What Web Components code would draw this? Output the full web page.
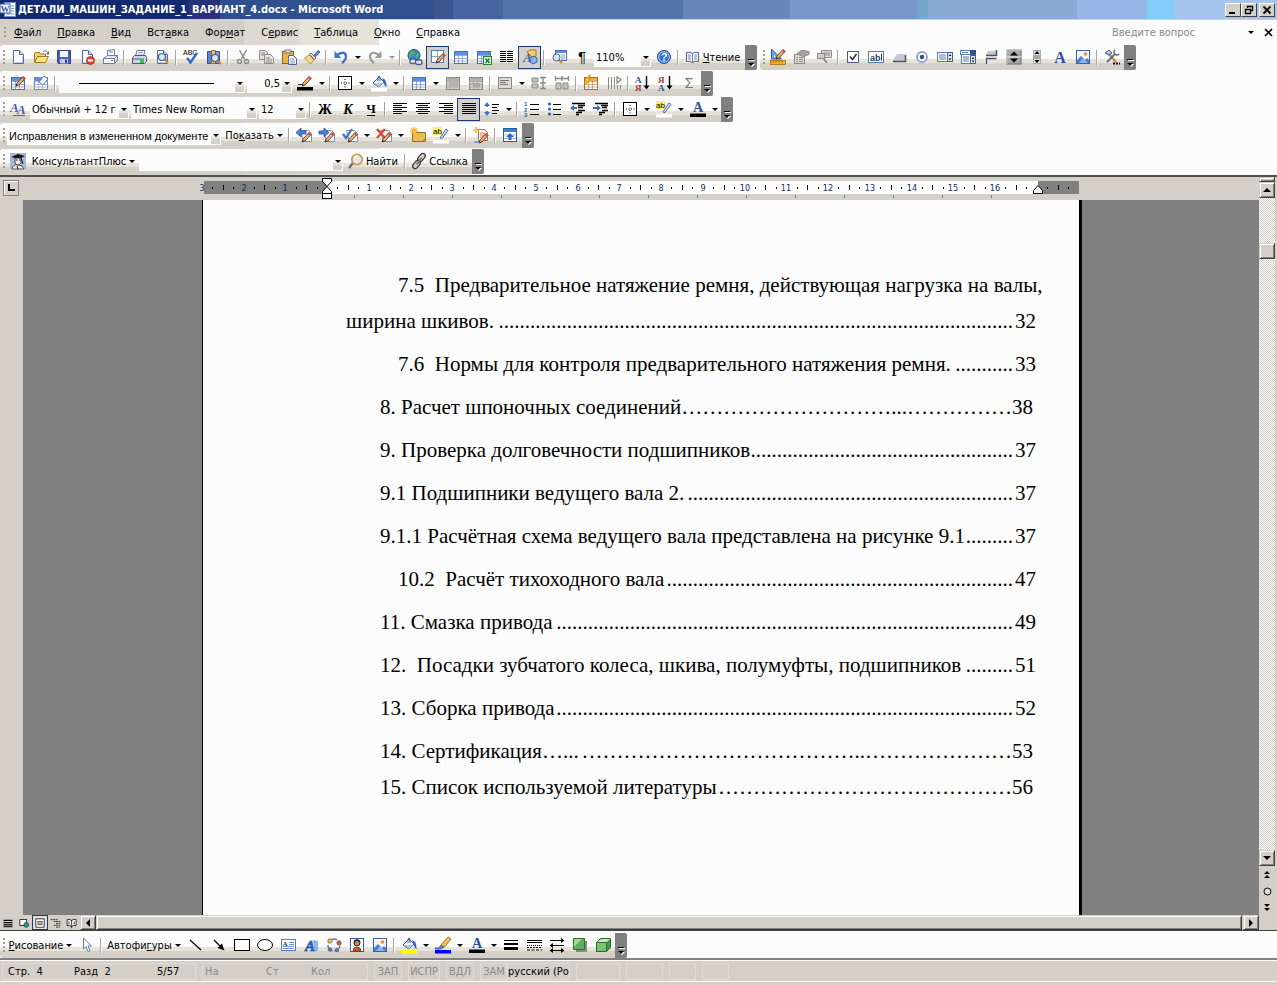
<!DOCTYPE html>
<html lang="ru">
<head>
<meta charset="utf-8">
<title>ДЕТАЛИ_МАШИН_ЗАДАНИЕ_1_ВАРИАНТ_4.docx - Microsoft Word</title>
<style>
body{margin:0;background:#fcfcfc;font:11px "DejaVu Sans Condensed","DejaVu Sans",sans-serif;color:#000}
</style>
</head>
<body>
<word-app></word-app>
<script>
/* ---------- icon drawings, 16 x 16 ---------- */
const page = '<path d="M3.500 1.500h6l4 4v9h-10z" fill="#fff" stroke="#4d6ba6"/><path d="M9.500 1.500v4h4" fill="#c9dcf5" stroke="#4d6ba6"/><path d="M12.500 7v6.500h-8" fill="none" stroke="#bcd2f0"/>';
const pencil = (x = 0, y = 0, c = '#f0b070') => `<g transform="translate(${x} ${y})"><path d="M5 11l1-3 6-6.500 2 2-6 6.500z" fill="${c}" stroke="#5a3418" stroke-width=".9"/><path d="M11 3l2 2 1.500-1.500-2-2z" fill="#d8493a"/><path d="M5 11l.6-2 1.400 1.300z" fill="#222"/></g>`;
const grid = (s = '#4a70b8', f = '#fff', h = '#5b8fe0') => `<rect x="1.500" y="2.500" width="13" height="12" fill="${f}" stroke="${s}"/><rect x="2" y="3" width="12" height="3" fill="${h}"/><path d="M2 6.500h12M2 9.500h12M2 12h12M5.500 6v8M9.500 6v8" stroke="${s}" stroke-opacity=".55" fill="none"/>`;
const glass = (x = 0, y = 0, f = '#cfe6fb') => `<g transform="translate(${x} ${y})"><path d="M10 10l4 4" stroke="#c98a3c" stroke-width="2.400"/><circle cx="8" cy="8" r="3.500" fill="${f}" stroke="#4a5f80" stroke-width="1.200"/></g>`;
const bucket = '<path d="M2 8l6-6 5 5-5 5z" fill="#eef4fc" stroke="#3f5f98"/><path d="M4 8h8l-4 4z" fill="#a9c6f0"/><path d="M7 6V2q1-2 2 0v4" fill="none" stroke="#3f5f98"/><path d="M11 3q5 1 4.500 9-2.500-1-3-5z" fill="#3a68c4"/>';
const letterA = '<text x="8" y="11" text-anchor="middle" font-family="Liberation Serif,serif" font-weight="bold" font-size="14" fill="#2c4f94">A</text>';
const bars = (a, b) => { let d = ''; for (let i = 0; i < 6; i++) { const w = i % 2 ? b : 14, x = a === 'l' ? 1 : a === 'r' ? 15 - w : 8 - w / 2; d += `M${x} ${2.5 + i * 2}h${w}`; } return `<path d="${d}" stroke="#000" fill="none"/>`; };
const revise = `<path d="M4.500 3.500h8l3 3v8h-8z" fill="#fff" stroke="#7a8db0"/>${pencil(1, 4)}`;
const swatch = c => `<rect x="0" y="13" width="16" height="3.500" fill="${c}"/>`;
const hl = `<rect x="0" y="0" width="9" height="8" fill="#f6f070"/><text x="0" y="7" font-family="Liberation Sans,sans-serif" font-size="8">ab</text><path d="M7 11l6-9 2 1.500-6 8z" fill="#cfe0fa" stroke="#4a69a5"/>${swatch('#fff')}`;
const pic = '<rect x="1.500" y="1.500" width="13" height="13" fill="#eef5ff" stroke="#3b5f9e"/><path d="M2 11l4-4 4 4 2-2 2 2v3H2z" fill="#4d7fcb"/><path d="M4 14l4-5 5 5z" fill="#8db5ea"/><circle cx="10.500" cy="5" r="1.800" fill="#f08a2c"/>';
const ICONS = {
  word: '<rect x="4.500" y=".5" width="11" height="14" fill="#fff" stroke="#6f8fc6"/><path d="M11 4h3M11 6.500h3M11 9h3M6 12h8" stroke="#6f8fc6"/><rect x="0" y="2" width="10" height="9" fill="#fff" stroke="#2b57a8"/><text x="5" y="9.500" text-anchor="middle" font-family="Liberation Serif,serif" font-weight="bold" font-size="9" fill="#2b57a8">W</text>',
  new: page,
  open: '<path d="M1.500 13.500v-9l1-1h4l1 1.500h5v3" fill="#f3d06b" stroke="#a27a1c"/><path d="M1.500 13.500l3-6h11l-3 6z" fill="#ffe28a" stroke="#a27a1c"/><path d="M10 3q3-3 5 1" stroke="#4d6f9d" fill="none"/><path d="M16 2v3.500h-3z" fill="#4d6f9d"/>',
  save: '<path d="M1.500 1.500h13v13h-12l-1-1z" fill="#4663b8" stroke="#2d3f86"/><rect x="4" y="2" width="8" height="6" fill="#f4f6fc"/><rect x="4" y="10" width="8" height="4.500" fill="#c3cce6"/><rect x="9" y="10.500" width="2" height="3.500" fill="#2d3f86"/>',
  perm: page + '<circle cx="11.500" cy="11.500" r="4" fill="#e2472f" stroke="#b02a18" stroke-width=".8"/><rect x="9" y="10.500" width="5" height="2" fill="#fff"/>',
  mail: '<path d="M5.500 6.500v-5l7-1v6" fill="#fff" stroke="#6b80a8"/><path d="M7 3h4" stroke="#6b80a8"/><path d="M1.500 9.500l4-3h10l-3 3z" fill="#dfe8f6" stroke="#6b80a8"/><rect x="1.500" y="9.500" width="11" height="5" fill="#f8fafe" stroke="#6b80a8"/><path d="M12.500 14.500l3-3v-5" fill="#b8c6e0" stroke="#6b80a8"/><rect x="9" y="11" width="2" height="1" fill="#d8492f"/>',
  print: '<path d="M4.500 7l1.500-5.500h8L12.500 7" fill="#fff" stroke="#5f7299"/><path d="M1.500 8.500l2-2h11l1 2v4l-2 2h-12z" fill="#cfd6e2" stroke="#4b5a78"/><path d="M2 10h11" stroke="#4b5a78"/><rect x="9" y="11" width="4" height="3" fill="#35c04a"/><path d="M7 3.500h5M6.500 5h5" stroke="#9fb0cf"/>',
  preview: page + glass(0, 0),
  spell: '<text x="0" y="6" font-family="Liberation Sans,sans-serif" font-size="7">ABC</text><path d="M4 9l3.500 4.500L14 4" fill="none" stroke="#2f67c9" stroke-width="2.400"/>',
  research: '<path d="M1.500 2.500h4v12h-4z" fill="#5c86d6" stroke="#344f8e"/><path d="M5.500 1.500h4v13h-4z" fill="#f0c060" stroke="#94702a"/><path d="M9.500 2.500h4v12h-4z" fill="#8d93d8" stroke="#4b4f8e"/>' + glass(1, 1),
  cut: '<path d="M4.500 1l5 9M11.500 1l-5 9" stroke="#8a8a8a" stroke-width="1.500"/><circle cx="4.500" cy="12.500" r="2" fill="none" stroke="#8a8a8a" stroke-width="1.400"/><circle cx="11.500" cy="12.500" r="2" fill="none" stroke="#8a8a8a" stroke-width="1.400"/>',
  copy: '<path d="M1.500 1.500h6l2 2v7h-8z" fill="#e2e0dc" stroke="#8c8a86"/><path d="M6.500 5.500h6l3 3v6h-9z" fill="#e8e6e2" stroke="#8c8a86"/><path d="M3 4h4M3 6h3M8 9h4M8 11h6M8 13h6" stroke="#8c8a86"/>',
  paste: '<rect x="1.500" y="2.500" width="11" height="12" fill="#e8b349" stroke="#8d6420"/><rect x="4" y="1" width="6" height="3" fill="#d8d8d8" stroke="#666" stroke-width=".8"/><path d="M7.500 6.500h5l3 3v6h-8z" fill="#fff" stroke="#4a66a0"/><path d="M9 10h4M9 12h5M9 14h5" stroke="#7b96c8"/>',
  format: '<path d="M10 6l4-4.500 2 1.500-4 4.500z" fill="#6d87c4" stroke="#3e4f80" stroke-width=".8"/><path d="M7 4l5 5-1.500 1.500-5-5z" fill="#d8d8e0" stroke="#555" stroke-width=".8"/><path d="M5 6l5 5-3.500 4L.5 9z" fill="#f4d88a" stroke="#a97e32" stroke-width=".8"/>',
  undo: '<path d="M4 6q8-5 9 1 0 4-4 7" fill="none" stroke="#3f74c8" stroke-width="2.400"/><path d="M1.500 2v7h7z" fill="#3f74c8"/>',
  redo: '<path d="M12 6q-8-5-9 1 0 4 4 7" fill="none" stroke="#9a9a9a" stroke-width="2.200"/><path d="M14.500 2v7h-7z" fill="#9a9a9a"/>',
  link: '<circle cx="7" cy="6.500" r="6" fill="#3d86cf" stroke="#1d4f8d"/><path d="M3 3q3-3 5 0-1 3-3 3t-2 4q-2-3 0-7zM9 5q3-1 3 2l-2 3z" fill="#59b54e"/><rect x="3" y="10" width="6" height="4.500" rx="2" fill="#dfe5f0" stroke="#4b5f8a" stroke-width="1.300"/><rect x="8.500" y="11" width="6.500" height="4.500" rx="2" fill="#dfe5f0" stroke="#4b5f8a" stroke-width="1.300"/>',
  tableborder: `<rect x="1.500" y="1.500" width="12" height="12" fill="#fff" stroke="#5b7bb0"/><path d="M7.500 2v11M2 7.500h11" stroke="#8ba4cf"/>${pencil(1, 3)}`,
  table: grid(),
  excel: grid() + '<rect x="7.500" y="7.500" width="8" height="8" fill="#dff2dc" stroke="#2d7d3a"/><path d="M9.500 9.500l4 4.500M13.500 9.500l-4 4.500" stroke="#1f7a30" stroke-width="1.500"/>',
  columns: '<path d="M1 2.500h6M1 4.500h6M1 6.500h6M1 8.500h6M1 10.500h6M1 12.500h6M8 2.500h6M8 4.500h6M8 6.500h6M8 8.500h6M8 10.500h6M8 12.500h6" stroke="#000"/>',
  drawing: '<path d="M5 3l3-2h6v6l-3 2z" fill="#f5cf6a" stroke="#a37a22"/><path d="M8 9l4-2 3 2v4l-4 2-3-2z" fill="#8fb2ea" stroke="#3b62ad"/><text x="5.500" y="13" text-anchor="middle" font-family="Liberation Serif,serif" font-weight="bold" font-style="italic" font-size="13" fill="#3b62ad">A</text>',
  docmap: '<rect x="4.500" y="1.500" width="11" height="10" fill="#fff" stroke="#4a70b8"/><rect x="5" y="2" width="10" height="2" fill="#5b8fe0"/><path d="M10 6h4M10 8h4M10 10h4" stroke="#7d98c8"/><path d="M8 11l3 3" stroke="#c98a3c" stroke-width="2.200"/><circle cx="5.500" cy="8.500" r="3.500" fill="#d6ebfd" stroke="#4a5f80"/>',
  para: '<text x="8" y="13" text-anchor="middle" font-family="Liberation Sans,sans-serif" font-size="15">¶</text>',
  help: '<circle cx="8" cy="8" r="6.500" fill="#2f6fd4" stroke="#1c479c"/><circle cx="8" cy="8" r="5.300" fill="none" stroke="#b7d2fa"/><text x="8" y="12" text-anchor="middle" font-family="Liberation Sans,sans-serif" font-weight="bold" font-size="11" fill="#fff">?</text>',
  book: '<path d="M1.500 3.500q4-1 6 1 2-2 6-1v9q-4-1-6 1-2-2-6-1z" fill="#fff" stroke="#4a5f8c"/><path d="M7.500 4v9M3 6h3M3 8h3M3 10h3M9 6h3M9 8h3M9 10h3" stroke="#6d84b4"/>',
  design: `<path d="M1.500 0l10 10h-10z" fill="#6da3ee" stroke="#2c5ba8"/><path d="M4 6l2 2H4z" fill="#fff"/>${pencil(1, -1)}<rect x=".5" y="11.500" width="15" height="4" fill="#f4b52e" stroke="#a86d10" stroke-width=".8"/><path d="M3 12v1.500M6 12v1.500M9 12v1.500M12 12v1.500" stroke="#6d4400" stroke-width=".8"/>`,
  props: '<rect x="1.500" y="5.500" width="10" height="9" fill="#e0deda" stroke="#8c8a86"/><path d="M3 8.500h2M6 8.500h4M3 10.500h2M6 10.500h4M3 12.500h2M6 12.500h4" stroke="#8c8a86"/><path d="M4 5l4-3.500h3l5 1v3l-6 2z" fill="#a5a39e" stroke="#8c8a86"/>',
  code: '<path d="M5.500 1.500h10v7h-10z" fill="#dddbd6" stroke="#8c8a86"/><path d="M7 4h7M7 6h7" stroke="#8c8a86"/><rect x="1.500" y="4.500" width="7" height="5" fill="#cfcdc8" stroke="#8c8a86"/><path d="M8 10l3 4" stroke="#8c8a86" stroke-width="2"/>',
  check: '<rect x="2.500" y="2.500" width="11" height="11" fill="#fff" stroke="#4a5f8c"/><path d="M5 7.500l2.500 3L11.500 5" fill="none" stroke="#333" stroke-width="1.600"/>',
  abl: '<rect x=".5" y="2.500" width="15" height="11" fill="#fff" stroke="#5b7bb0"/><text x="2" y="11.500" font-family="Liberation Sans,sans-serif" font-weight="bold" font-size="9" fill="#2d4068">ab</text><path d="M13.500 4.500v7" stroke="#2d4068"/>',
  cmd: '<path d="M2 11l4-6h8v7H2z" fill="#c3c8d4"/><path d="M2 12.500h12.500V6" fill="none" stroke="#4a5266" stroke-width="1.500"/>',
  radio: '<circle cx="8" cy="8" r="5" fill="#fff" stroke="#8ea4c9" stroke-width="1.800"/><circle cx="8" cy="8" r="2.200" fill="#2d5190"/>',
  list: '<rect x=".5" y="3.500" width="10" height="9" fill="#fff" stroke="#5b7bb0"/><path d="M2 6h7M2 8h7M2 10h7" stroke="#5b7bb0"/><rect x="10.500" y="3.500" width="5" height="9" fill="#dbe5f5" stroke="#4a5f8c"/><path d="M11.500 7l1.500-2 1.500 2zM11.500 9.500h3L13 11.500z" fill="#222"/>',
  combo: '<rect x=".5" y="1.500" width="15" height="4" fill="#fff" stroke="#5b7bb0"/><rect x="10" y="1" width="6" height="5" fill="#34508a"/><rect x="1.500" y="5.500" width="9" height="9" fill="#fff" stroke="#5b7bb0"/><path d="M3 8h6M3 10h6M3 12h6M2 3.500h6" stroke="#5b7bb0"/><rect x="10.500" y="6.500" width="5" height="8" fill="#dbe5f5" stroke="#4a5f8c"/><path d="M11.500 10l1.500-2 1.500 2zM11.500 11.500h3L13 13.500z" fill="#222"/>',
  toggle: '<path d="M3 6l2-4h8v4z" fill="#c3c8d4"/><path d="M3 6.500h10.500V1" fill="none" stroke="#4a5266" stroke-width="1.500"/><path d="M3 15v-5h9l-3 5z" fill="#dfe1e6"/><path d="M3 9.500h10.500M3.500 9v6" stroke="#4a5266" stroke-width="1.300"/>',
  spin: '<rect x="1" y="1" width="14" height="14" fill="#a9a9a9" stroke="#666"/><path d="M1 15V1h14" fill="none" stroke="#ddd"/><path d="M8 2.500l4 4H4zM8 13.500l4-4H4z" fill="#000"/><path d="M1 8h14" stroke="#eee"/>',
  scroll: '<rect x="4.500" y="1.500" width="7" height="5" fill="#d8d8d8" stroke="#aaa"/><rect x="4.500" y="9.500" width="7" height="5" fill="#d8d8d8" stroke="#aaa"/><path d="M8 2l2.500 3h-5zM8 14l2.500-3h-5z" fill="#000"/><path d="M4 8h8" stroke="#555"/>',
  label: '<text x="8" y="14" text-anchor="middle" font-family="Liberation Serif,serif" font-weight="bold" font-size="16" fill="#2c4f94">A</text>',
  pic,
  tools: '<path d="M3 3l9 10" stroke="#c58a3a" stroke-width="2.200"/><path d="M1 4l4-3 3 3-3 2z" fill="#b8c4dc" stroke="#4a5a7c"/><path d="M3 13l8-8" stroke="#5f6f8c" stroke-width="2"/><path d="M11 1q-2 2 0 4t4 0" fill="none" stroke="#5f6f8c" stroke-width="1.500"/><path d="M9 14.500h2M12 14.500h2M15 14.500h1" stroke="#000" stroke-width="1.800"/>',
  drawtable: grid() + pencil(1, 0),
  erasetable: grid('#6f8fc6') + '<path d="M6 7l5-6 4 3-5 6z" fill="#f3f6fc" stroke="#5b7bb0"/>',
  penline: `${pencil(0, 0)}<path d="M1 9.500h5" stroke="#333"/><rect x="0" y="12" width="16" height="3.500"/>`,
  border: '<rect x="1.500" y="1.500" width="13" height="13" fill="#fff" stroke="#000"/><path d="M8 4v9M4 8h9" stroke="#000" stroke-dasharray="1 1.500"/>',
  fillwhite: bucket + swatch('#fff'),
  merge: grid('#8c8a86', '#d6d3cd', '#b5b3ae') + '<rect x="4" y="6" width="9" height="6" fill="#b5b3ae"/>',
  split: grid('#8c8a86', '#d6d3cd', '#b5b3ae') + '<path d="M3 8h9v4H6z" fill="#aaa8a3"/>',
  cellalign: '<rect x="1.500" y="2.500" width="13" height="11" fill="#dddbd6" stroke="#8c8a86"/><path d="M3 5.500h9M3 7.500h6M3 9.500h8" stroke="#77756f"/>',
  distrow: '<path d="M1 3h6v4H1zM1 9h6v4H1z" fill="#c4c2bd" stroke="#8c8a86"/><path d="M9 2.500h6M9 8h6M9 13.500h6M12 3v10" stroke="#8c8a86" stroke-width="1.400"/>',
  distcol: '<path d="M2 8h5v6H2zM9 8h5v6H9z" fill="#c4c2bd" stroke="#8c8a86"/><path d="M1.500 1v5M8 1v5M14.500 1v5M2 3.500h12" stroke="#8c8a86" stroke-width="1.400"/>',
  autoformat: grid('#b06a28', '#fff', '#f0a848') + '<path d="M6 0L1 6h3L1 11l7-7H5l3-4z" fill="#f4c53c" stroke="#b8860b" stroke-width=".6"/>',
  textdir: '<path d="M2.500 2v12M5.500 2v12M8.500 2v12" stroke="#8c8a86"/><path d="M11 2l4 2.500L11 8z" fill="none" stroke="#8c8a86" stroke-width="1.300"/><path d="M11.500 14v-4M14.500 14v-4" stroke="#8c8a86"/>',
  sortaz: '<text x="0" y="7.500" font-family="Liberation Serif,serif" font-weight="bold" font-size="9" fill="#2c4f94">А</text><text x="0" y="15.500" font-family="Liberation Serif,serif" font-weight="bold" font-size="9" fill="#a23c34">Я</text><path d="M11.500 1v11" stroke="#000" stroke-width="1.400"/><path d="M8.500 10.500h6l-3 4z"/>',
  sortza: '<text x="0" y="7.500" font-family="Liberation Serif,serif" font-weight="bold" font-size="9" fill="#a23c34">Я</text><text x="0" y="15.500" font-family="Liberation Serif,serif" font-weight="bold" font-size="9" fill="#2c4f94">А</text><path d="M11.500 1v11" stroke="#000" stroke-width="1.400"/><path d="M8.500 10.500h6l-3 4z"/>',
  sum: '<text x="8" y="13" text-anchor="middle" font-family="Liberation Sans,sans-serif" font-size="14" fill="#77756f">Σ</text>',
  styles: '<text x="0" y="11" font-family="Liberation Serif,serif" font-style="italic" font-weight="bold" font-size="13" fill="#3f62b0">A</text><text x="7" y="13" font-family="Liberation Serif,serif" font-style="italic" font-weight="bold" font-size="13" fill="#5a50b0">A</text><path d="M3 14.500h12" stroke="#8147a8"/>',
  bold: '<text x="8" y="13" text-anchor="middle" font-family="Liberation Serif,serif" font-weight="bold" font-size="14">Ж</text>',
  italic: '<text x="8" y="13" text-anchor="middle" font-family="Liberation Serif,serif" font-weight="bold" font-style="italic" font-size="14">К</text>',
  under: '<text x="8" y="12" text-anchor="middle" font-family="Liberation Serif,serif" font-weight="bold" font-size="13">Ч</text><path d="M4 14.500h8" stroke="#000"/>',
  left: bars('l', 9), center: bars('c', 10), right: bars('r', 9), justify: bars('l', 14),
  spacing: '<path d="M3 3v3M3 10v3" stroke="#3b6fc8" stroke-width="1.600"/><path d="M0 5l3-4 3 4zM0 11h6l-3 4z" fill="#3b6fc8"/><path d="M8 3.500h7M8 6.500h5M8 9.500h7M8 12.500h5" stroke="#000"/>',
  numbers: '<text x="0" y="5" font-family="Liberation Sans,sans-serif" font-weight="bold" font-size="6" fill="#2c5fb8">1</text><text x="0" y="10.500" font-family="Liberation Sans,sans-serif" font-weight="bold" font-size="6" fill="#2c5fb8">2</text><text x="0" y="16" font-family="Liberation Sans,sans-serif" font-weight="bold" font-size="6" fill="#2c5fb8">3</text><path d="M6 3.500h9M6 8.500h9M6 13.500h9" stroke="#000"/>',
  bullets: '<g fill="#2c5fb8"><circle cx="2.500" cy="3" r="1.600"/><circle cx="2.500" cy="8" r="1.600"/><circle cx="2.500" cy="13" r="1.600"/></g><path d="M6 3.500h8M6 8.500h8M6 13.500h8" stroke="#000"/>',
  outdent: '<path d="M2 2.500h13M8 4.500h7M8 6.500h5M8 9.500h7M6 11.500h6M6 13.500h3" stroke="#000" stroke-width="1.300"/><path d="M0 7l4-3v2h3v2H4v2z" fill="#3b6fc8"/>',
  indent: '<path d="M2 2.500h13M8 4.500h7M9 6.500h5M9 9.500h6M6 11.500h6M6 13.500h3" stroke="#000" stroke-width="1.300"/><path d="M8 7L4 4v2H0v2h4v2z" fill="#3b6fc8"/>',
  hl,
  fontcolor: letterA + '<rect x="0" y="12.500" width="16" height="3.500"/>',
  prev: revise + '<path d="M0 5.500L5 1v3h5v3H5v3z" fill="#4c83d8" stroke="#24509c" stroke-width=".8"/>',
  next: revise + '<path d="M10 5.500L5 1v3H0v3h5v3z" fill="#4c83d8" stroke="#24509c" stroke-width=".8"/>',
  accept: revise + '<path d="M1 7l3 4 6-9" fill="none" stroke="#3d73c8" stroke-width="2.200"/>',
  reject: revise + '<path d="M1 2l8 9M9 2l-8 9" stroke="#e0442c" stroke-width="2.200"/>',
  comment: '<path d="M2.500 5.500h13v9h-13z" fill="#e6bf58" stroke="#946c1c"/><path d="M12 14.500l3.500-3" stroke="#946c1c"/><path d="M0 4h8M4 0v8M1 1l6 6M7 1L1 7" stroke="#f5b83c" stroke-width="1.300"/>',
  track: `<path d="M5.500 2.500h6l3 3v8h-9z" fill="#fff" stroke="#a87040"/><path d="M7 6h5M7 8h6M7 10h6" stroke="#d86a48"/>${pencil(1, 5)}<path d="M0 3h6M3 0v6" stroke="#f5b83c" stroke-width="1.600"/><path d="M1 15h6" stroke="#3b6fc8"/>`,
  pane: '<rect x="1.500" y="1.500" width="13" height="13" fill="#fff" stroke="#2c5ba8"/><rect x="2" y="2" width="12" height="3" fill="#3f7bd8"/><path d="M2 8h12M2 11.500h12" stroke="#9db9e6"/><path d="M8 6l4 4H9.500v3h-3v-3H4z" fill="#2c67c4"/>',
  student: '<rect width="16" height="16" fill="#a9b6d8"/><path d="M1 4l7-3 7 2-6 3z" fill="#151515"/><path d="M5 5h6v5q-3 4-6 0z" fill="#eee8e0" stroke="#222" stroke-width=".8"/><path d="M2 16q1-5 6-4 5 0 6 4z" fill="#f2f2f2" stroke="#333" stroke-width=".8"/><path d="M11 5l2 6M6 7h1.500M9 7h1.500M7 13l1 3" stroke="#111"/>',
  find: '<path d="M1 15l4-5" stroke="#5d6b80" stroke-width="2.400"/><circle cx="9" cy="6.500" r="5.200" fill="#d7ecfa" stroke="#d8963c" stroke-width="1.800"/><path d="M6 5q1-2 4-2" stroke="#fff" fill="none" stroke-width="1.300"/>',
  chain: '<g fill="#d0d0d0" stroke="#3c3c3c" stroke-width="1.300"><rect x="8" y="0" width="5" height="9" rx="2.500" transform="rotate(40 10.500 4.500)"/><rect x="3" y="7" width="5" height="9" rx="2.500" transform="rotate(40 5.500 11.500)"/></g><path d="M10.500 5l-5 6.500" stroke="#777" stroke-width="2"/>',
  cursor: '<path d="M4.500 1v11l2.500-2.500L9 14.500l2-1-2-4.500h3.500z" fill="#fff" stroke="#5b7bb0"/>',
  line: '<path d="M2 3l11 10" stroke="#000" stroke-width="1.200"/>',
  arrow: '<path d="M3 3l7 7" stroke="#000" stroke-width="1.200"/><path d="M13.500 13.500L6.500 11l4.500-4.500z"/>',
  rect: '<rect x=".5" y="2.500" width="15" height="11" fill="#fff" stroke="#000"/>',
  oval: '<ellipse cx="8" cy="8" rx="7.500" ry="5.500" fill="#fff" stroke="#000"/>',
  textbox: '<rect x="1.500" y="2.500" width="14" height="11" fill="#fff" stroke="#5b7bb0"/><text x="2.500" y="8.500" font-family="Liberation Serif,serif" font-weight="bold" font-size="7" fill="#1c3e86">A</text><path d="M9 5.500h5M9 7.500h5M3 9.500h11M3 11.500h11" stroke="#6d8ec6"/>',
  wordart: '<path d="M10 3l5 1v10l-4 1z" fill="#8db5ea"/><text x="7" y="14" text-anchor="middle" font-family="Liberation Serif,serif" font-weight="bold" font-style="italic" font-size="15" fill="#2f6bd0" stroke="#1c479c" stroke-width=".6">A</text>',
  diagram: '<path d="M8 2a6 6 0 1 1-.1 0" fill="none" stroke="#4a70b8" stroke-dasharray="3 2" stroke-width="1.400"/><g stroke="#555" stroke-width=".7"><circle cx="4" cy="4" r="2.200" fill="#f2c24e"/><circle cx="13" cy="6" r="2.200" fill="#e0583c"/><circle cx="4" cy="12.500" r="1.800" fill="#4c83d8"/><circle cx="11" cy="13" r="1.800" fill="#4c83d8"/></g>',
  clip: '<rect x="1.500" y="1.500" width="13" height="13" fill="#fff" stroke="#3b5f9e"/><circle cx="8" cy="6" r="3" fill="#c98a5a" stroke="#222"/><path d="M5 5q3-4 6 0" stroke="#222" stroke-width="1.600" fill="none"/><path d="M4 14q0-4 4-4t4 4z" fill="#d85a2a" stroke="#5a2a10" stroke-width=".7"/>',
  fillyellow: bucket + swatch('#ff0'),
  brush: `<path d="M0 11q4 1 6-3l3 2q-2 3-9 2z" fill="#4f7fd0" stroke="#2c4f94" stroke-width=".6"/><path d="M6 8l7-8 3 2-6.500 8z" fill="#f2c14e" stroke="#7a5a20" stroke-width=".8"/>${swatch('#00f')}`,
  lines: '<path d="M1 3.500h14" stroke="#000"/><path d="M1 7h14" stroke="#000" stroke-width="2"/><path d="M1 11.500h14" stroke="#000" stroke-width="3"/>',
  dashes: '<path d="M1 3.500h15M1 5.500h15" stroke="#000"/><path d="M1 8.500h15" stroke="#000" stroke-dasharray="1 1"/><path d="M1 10.500h15" stroke="#000" stroke-dasharray="2 1"/><path d="M1 13h15" stroke="#000" stroke-dasharray="3 1.500"/>',
  arrows: '<path d="M1 3.500h12M3 8.500h12M3 13.500h10" stroke="#000"/><path d="M15.500 3.500L12 1v5zM.5 8.500L4 6v5zM15.500 13.500L12 11v5zM.5 13.500L4 11v5z"/>',
  shadow: '<path d="M4 4h11v11H4z" fill="#888"/><path d="M1.500 1.500h11v11h-11z" fill="#5fae5a" stroke="#2f6f2e"/><path d="M2 2h8L2 10z" fill="#9fd79a"/>',
  cube: '<path d="M1.500 5.500l4-4h10v9l-4 4h-10z" fill="#4c9a48" stroke="#2c6a2a"/><path d="M1.500 5.500h10v9h-10z" fill="#78c273" stroke="#2c6a2a"/><path d="M2 5l4-3h9l-3.500 3z" fill="#c3ecbe"/>',
  vnormal: '<path d="M2 4.500h12M2 7.500h12M2 10.500h12M2 13h12" stroke="#000" stroke-width="1.400"/>',
  vweb: '<rect x="2.500" y="3.500" width="9" height="8" fill="#fff" stroke="#000"/><circle cx="11" cy="10.500" r="3.200" fill="#3a9a52" stroke="#113c98"/>',
  vprint: '<rect x="2.500" y="2.500" width="11" height="11" fill="#fff" stroke="#000"/><path d="M4.500 6.500h7M4.500 9.500h7" stroke="#000" stroke-width="1.300"/>',
  voutline: '<path d="M1 3.500h9M5 6h9M8 8.500h6M5 11h9M8 13.500h5" stroke="#000" stroke-dasharray="2.500 .8"/>',
  vread: '<path d="M1.500 3.500q4-1 6 1 2-2 6-1v8q-4-1-6 1-2-2-6-1z" fill="#fff" stroke="#000"/><path d="M7.500 4v11M4 6v4M11 6v4" stroke="#000"/>'
};
const svg = (n, s = 16) => `<svg width="${s}" height="${s}" viewBox="0 0 16 16" aria-hidden="true">${ICONS[n] || ''}</svg>`;

class Base extends HTMLElement {
  connectedCallback() {
    if (this.shadowRoot) return;
    const t = document.createElement('template');
    t.innerHTML = this.view();
    this.attachShadow({ mode: 'open' }).append(t.content.cloneNode(true));
    this.ready?.();
  }
}
const def = (n, c) => customElements.define(n, c);

/* <tool-button icon label active menu>: an icon, a caption in the slot, or both */
def('tool-button', class extends Base {
  view() {
    const i = this.getAttribute('icon'), l = this.getAttribute('label');
    return `<style>
      :host{display:block;flex:none;height:23px;width:var(--w,23px)}
      button{all:unset;box-sizing:border-box;display:flex;align-items:center;justify-content:center;gap:2px;width:100%;height:100%;white-space:nowrap}
      :host([active]) button{background:#d4d0ca;border:1px solid #1c3a78}
      svg{display:block;flex:none;margin-bottom:1px;overflow:visible}
      i{border:3px solid transparent;border-top-color:#000;border-bottom:0;margin-left:1px}
    </style><button type="button"${l ? ` aria-label="${l}"` : ''}>${i ? svg(i) : ''}<slot></slot>${this.hasAttribute('menu') ? '<i></i>' : ''}</button>`;
  }
});
def('drop-arrow', class extends Base {
  view() {
    return `<style>:host{display:block;flex:none;width:11px;height:23px}
      button{all:unset;display:flex;width:100%;height:100%;align-items:center;justify-content:center}
      i{border:3px solid transparent;border-top-color:var(--arrow,#000);border-bottom:0}</style>
      <button type="button" aria-label="Ещё варианты"><i></i></button>`;
  }
});
def('tool-sep', class extends Base {
  view() { return '<style>:host{display:block;flex:none;width:1px;height:15px;margin:0 3px 0 2px;background:#a7a39c;box-shadow:1px 0 #fff}</style>'; }
});
def('combo-box', class extends Base {
  view() {
    return `<style>:host{display:block;flex:none;position:relative;height:19px;background:#fcfcfc;width:var(--w);margin:0 1px}
      select{appearance:none;border:0;margin:0;padding:0 12px 0 2px;background:transparent;color:#000;font:inherit;width:100%;height:100%;text-align:inherit;border-radius:0;outline:0}
      i{position:absolute;right:0;top:0;bottom:0;width:11px;pointer-events:none;display:flex;align-items:center;justify-content:center;background:linear-gradient(#fcfcfc 55%,#e7e3d9 55% 72%,#d4d0c8 72%);border:1px solid #fcfcfc;border-top:0;box-sizing:border-box}
      i::before{content:"";border:3px solid transparent;border-top-color:#000;border-bottom:0}
      :host([rule])::before{content:"";position:absolute;left:20px;right:31px;top:9px;height:1px;background:#000}
    </style><select aria-label="${this.getAttribute('label')}"><option>${this.getAttribute('value') || ''}</option></select><i></i>`;
  }
});
def('tool-bar', class extends Base {
  view() {
    return `<style>:host{display:flex;flex:none;align-items:center;height:25px;width:max-content;border-radius:3px 2px 2px 3px;background:linear-gradient(#fcfcfc 55%,#e7e3d9 55% 72%,#d4d0c8 72%);overflow:hidden}
      .grip{width:2px;height:15px;margin:0 1px 0 3px;background:repeating-linear-gradient(#a5a198 0 2px,transparent 2px 4px)}
      .end{all:unset;width:12px;height:25px;background:#808080;margin-left:1px;display:flex;flex-direction:column;align-items:center;justify-content:flex-end}
      .end b{width:6px;height:1px;background:#000;box-shadow:1px 1px #fff;margin-bottom:3px}
      .end i{border:3px solid transparent;border-top-color:#000;border-bottom:0;margin-bottom:4px;filter:drop-shadow(1px 1px #fff)}
    </style><span class="grip"></span><slot></slot><button class="end" type="button" aria-label="Параметры панелей инструментов"><b></b><i></i></button>`;
  }
});
def('title-bar', class extends Base {
  view() {
    return `<style>:host{display:flex;align-items:center;height:19px;color:#fff;font-weight:bold;border-bottom:1px solid #d4d0c8;
      background:linear-gradient(90deg,#122b6e 14.700%,#27317c 14.700% 17.200%,#2f4f8d 17.200% 34%,#3c5690 34% 35.500%,#4665a0 35.500% 39.400%,#5272aa 39.400% 53.500%,#6787b9 53.500% 61.900%,#7998c9 61.900% 71.800%,#73a8cc 71.800% 72.700%,#8aaad6 72.700% 84.300%,#96b6e6 84.300% 89.800%,#82cdfa 89.800% 91.900%,#a4c6ee 91.900%)}
      h1{font:inherit;margin:0 auto 0 2px;white-space:nowrap}
      svg{flex:none;display:block}
      button{all:unset;box-sizing:border-box;width:16px;height:14px;background:#d4d0c8;border:1px solid;border-color:#fff #404040 #404040 #fff;display:flex;align-items:center;justify-content:center}
      .x{margin:0 2px}
    </style>${svg('word')}<h1><slot></slot></h1>
    <button type="button" aria-label="Свернуть"><svg width="10" height="10"><path d="M1 8h6" stroke="#000" stroke-width="2"/></svg></button>
    <button type="button" aria-label="Восстановить"><svg width="10" height="10"><path d="M3.500 3V1.500h5v4H7M3 1.500h6M1.500 4.500h5v4h-5zM1 4.500h6" fill="none" stroke="#000" stroke-width="1.300"/></svg></button>
    <button class="x" type="button" aria-label="Закрыть"><svg width="10" height="10"><path d="M1.500 1.500l7 7M8.500 1.500l-7 7" stroke="#000" stroke-width="1.800"/></svg></button>`;
  }
});
def('menu-bar', class extends Base {
  view() {
    return `<style>:host{display:flex;align-items:center;height:25px}
      .grip{width:2px;height:12px;margin:0 8px 0 4px;background:repeating-linear-gradient(#a5a198 0 2px,transparent 2px 4px)}
      nav{display:flex;gap:16px;flex:1}
      nav a{color:#000;text-decoration:none;white-space:nowrap}
      input{border:0;background:none;font:inherit;width:136px;padding:0;outline:0}
      input::placeholder{color:#8a8a8a;opacity:1}
      i{border:3px solid transparent;border-top-color:#000;border-bottom:0;margin-right:10px}
      button{all:unset;width:9px;height:9px;margin-right:4px}
      svg{display:block}
    </style><span class="grip"></span><nav>
    <a href="#file"><u>Ф</u>айл</a><a href="#edit"><u>П</u>равка</a><a href="#view"><u>В</u>ид</a><a href="#insert">Вст<u>а</u>вка</a><a href="#format">Фор<u>м</u>ат</a><a href="#service">С<u>е</u>рвис</a><a href="#table"><u>Т</u>аблица</a><a href="#window"><u>О</u>кно</a><a href="#help"><u>С</u>правка</a></nav>
    <input aria-label="Введите вопрос" placeholder="Введите вопрос"><i></i>
    <button type="button" aria-label="Закрыть документ"><svg width="9" height="9"><path d="M1 1l7 7M8 1L1 8" stroke="#000" stroke-width="1.600"/></svg></button>`;
  }
});
/* horizontal ruler; one centimetre is 41.750 units, zero at the left text margin */
def('doc-ruler', class extends Base {
  view() {
    const u = 41.75, z = 125; let s = '', n = '';
    for (let k = -11; k <= 71; k++) {
      const x = z + k * u / 4;
      if (k === 0 || k === 68 || x > 874) continue;
      if (k % 4 === 0) n += `<text x="${Math.round(x)}" y="15" text-anchor="middle">${Math.abs(k / 4)}</text>`;
      else if (k % 2 === 0) s += `<path d="M${Math.round(x)}.5 9v5"/>`;
      else s += `<path d="M${Math.round(x)}.5 11v2"/>`;
    }
    let t = ''; for (let x = 152; x < 820; x += 49) t += `<path d="M${x}.5 19v3" stroke="#808080"/>`;
    return `<style>:host{display:flex;height:23px;background:#d4d0c8;box-sizing:border-box}
      .tab{all:unset;flex:none;box-sizing:border-box;width:16px;height:16px;margin:3px 0 0 3px;border:1px solid #808080;box-shadow:inset 1px 1px #fff;display:grid;place-items:center}
      .track{flex:1;display:flex;justify-content:center;margin-left:4px;overflow:hidden}
      svg{display:block;flex:none} text{font-size:9px;fill:#14305c}
    </style><button class="tab" type="button" aria-label="Позиция табуляции"><svg width="8" height="8"><path d="M2 0v6h6" fill="none" stroke="#000" stroke-width="2"/></svg></button>
    <div class="track"><svg width="884" height="23" viewBox="-3 1 884 23"><rect x="2" y="5" width="875" height="13" fill="#808080"/><rect x="125" y="5" width="711" height="13" fill="#fcfcfc"/><text x="0" y="15" text-anchor="middle">3</text>
    ${n}<g stroke="#000" fill="none">${s}${t}</g>
    <g fill="#fcfcfc" stroke="#000"><path d="M120.500 2.500h9v3l-4.500 5-4.500-5z"/><path d="M120.500 17.500v-2l4.500-5 4.500 5v2z"/><rect x="120.500" y="17.500" width="9" height="5"/><path d="M831.500 17.500v-3l4.500-5 4.500 5v3z"/></g></svg></div>`;
  }
});
/* one line of the contents: entry, leader, page number */
def('toc-line', class extends Base {
  view() {
    const n = this.getAttribute('page');
    return `<style>:host{display:flex;height:36px;line-height:36px;margin-bottom:7px;padding-right:2px;white-space:pre;box-sizing:border-box}
      :host([level="1"]){padding-left:34px} :host([level="2"]){padding-left:52px}
      :host([tight]){margin-bottom:0} :host([fill="…"]){padding-right:5px}
      .fill{flex:1;min-width:0;overflow:hidden;text-align:right;margin-right:2px} :host([fill="…"]) .fill{margin-right:0}
    </style><span><slot></slot></span>${n ? `<span class="fill"></span><span>${n}</span>` : ''}`;
  }
  ready() {
    const f = this.shadowRoot.querySelector('.fill');
    if (!f) return;
    const ch = this.getAttribute('fill') || '.', c = document.createElement('canvas').getContext('2d');
    const cs = getComputedStyle(this); c.font = `${cs.fontSize} ${cs.fontFamily}`;
    const w = c.measureText(ch).width, dot = c.measureText('.').width;
    /* whole ellipses first, plain dots in what is left */
    const fill = () => {
      const n = Math.max(0, Math.floor(f.clientWidth / w));
      const rest = ch === '.' ? 0 : Math.floor((f.clientWidth - n * w) / dot), a = Math.floor(n * 2 / 3);
      f.textContent = ch.repeat(a) + '.'.repeat(Math.max(0, rest)) + ch.repeat(n - a);
    };
    new ResizeObserver(fill).observe(f);
    fill();
  }
});
const bevel = 'all:unset;box-sizing:border-box;flex:none;background:#d4d0c8;border:1px solid;border-color:#d4d0c8 #404040 #404040 #d4d0c8;box-shadow:inset 1px 1px #fff,inset -1px -1px #808080;display:grid;place-items:center;';
const checker = 'background:repeating-conic-gradient(#fff 0 25%,#d4d0c8 0 50%) 0 0/2px 2px;';
def('scroll-v', class extends Base {
  view() {
    return `<style>:host{display:flex;flex-direction:column;width:16px;${checker}}
      button{${bevel}width:16px;height:16px}.split{height:5px}.thumb{margin-top:45px}.gap{flex:1}
      .nav{background:#d4d0c8;display:flex;flex-direction:column;height:63px;padding-top:1px}
      .nav button{border:0;box-shadow:none}svg{display:block}</style>
      <button class="split" type="button" aria-label="Разделить"></button>
      <button type="button" aria-label="Вверх"><svg width="8" height="4"><path d="M0 4h8L4 0z"/></svg></button>
      <button class="thumb" type="button" aria-label="Бегунок"></button><span class="gap"></span>
      <button type="button" aria-label="Вниз"><svg width="8" height="4"><path d="M0 0h8L4 4z"/></svg></button>
      <div class="nav"><button type="button" aria-label="Предыдущая страница"><svg width="8" height="8"><path d="M4 0l3 3H1zM4 4l3 3H1zM2 7h4"/></svg></button>
      <button type="button" aria-label="Выбор объекта"><svg width="9" height="9"><circle cx="4.500" cy="4.500" r="3.500" fill="#ddd" stroke="#000"/></svg></button>
      <button type="button" aria-label="Следующая страница"><svg width="8" height="8"><path d="M4 4l3-3H1zM4 8l3-3H1z"/></svg></button></div>`;
  }
});
def('scroll-h', class extends Base {
  view() {
    const v = (n, l, a) => `<button class="v${a ? ' a' : ''}" type="button" aria-label="${l}">${svg(n, 12)}</button>`;
    return `<style>:host{display:flex;height:15px;background:#d4d0c8}
      button{${bevel}width:16px;height:15px}svg{display:block}
      .v{border:0;box-shadow:none}.a{border:1px solid #1c3a78;background:#e4e2de}
      .thumb{flex:1;margin-right:1px}</style>
      ${v('vnormal', 'Обычный режим')}${v('vweb', 'Веб-документ')}${v('vprint', 'Разметка страницы', 1)}${v('voutline', 'Структура')}${v('vread', 'Чтение')}
      <button type="button" aria-label="Влево"><svg width="4" height="8"><path d="M4 0v8L0 4z"/></svg></button>
      <button class="thumb" type="button" aria-label="Бегунок"></button>
      <button type="button" aria-label="Вправо"><svg width="4" height="8"><path d="M0 0v8l4-4z"/></svg></button>`;
  }
});
def('status-bar', class extends Base {
  view() {
    return `<style>:host{display:flex;align-items:center;gap:6px;height:20px;padding-left:2px;background:#d4d0c8;border-top:1px solid #fff;border-bottom:1px solid #fff}
      div{box-sizing:border-box;height:17px;border:1px solid #dedbd4;display:flex;align-items:center;justify-content:center;white-space:pre;color:#8a8a8a;overflow:hidden}
      .p{width:194px;justify-content:flex-start;color:#000;padding-left:5px}.p span,.q span{flex:none}
      .p span:nth-child(1){width:66px}.p span:nth-child(2){width:83px}
      .q{width:166px;justify-content:flex-start;padding-left:2px}.q span:nth-child(1){width:61px}.q span:nth-child(2){width:45px}
      .m{width:28px}.w{width:32px}.l{width:64px;color:#000;justify-content:flex-start;margin-left:-8px;padding-left:1px}.e{width:44px}.f{width:37px}.g{width:27px}
    </style><div class="p"><span>Стр.  4</span><span>Разд  2</span><span>5/57</span></div><div class="q"><span>На</span><span>Ст</span><span>Кол</span></div>
    <div class="m">ЗАП</div><div class="w">ИСПР</div><div class="m">ВДЛ</div><div class="m">ЗАМ</div><div class="l">русский (Ро</div><div class="e"></div><div class="f"></div><div class="g"></div><div class="g"></div>`;
  }
});

/* a run of tool buttons: name:label, "|" separator, "v" drop arrow, "*" marks a pressed button */
const run = s => s.split(',').map(k => {
  if (k === '|') return '<tool-sep></tool-sep>';
  if (k === 'v') return '<drop-arrow></drop-arrow>';
  if (k === 'g') return '<drop-arrow style="--arrow:#999"></drop-arrow>';
  const [n, l] = k.replace('*', '').split(':');
  return `<tool-button icon="${n}" label="${l}"${k.includes('*') ? ' active' : ''}></tool-button>`;
}).join('');

def('word-app', class extends Base {
  view() {
    return `<style>
      :host{display:flex;flex-direction:column;min-height:100vh}
      .dock{background:linear-gradient(90deg,#d4d0c8 19.100%,#dedad2 19.100% 23.500%,#e7e3d9 23.500% 29.700%,#fcfcfc 29.700%)}
      .row{display:flex;gap:3px;margin-bottom:1px}
      .frame{flex:1;display:flex;border-top:2px solid #505050;background:#d4d0c8}
      .main{flex:1;display:flex;flex-direction:column;min-width:0}
      .desk{flex:1;background:#808080;margin-left:23px;padding-left:2px;display:flex;justify-content:center}
      .page{box-sizing:border-box;width:880px;background:#fcfcfc;border-left:1px solid #000;border-right:3px solid #000;padding:67px 41px 0 143px;font:21px "Liberation Serif",serif}
      scroll-v{margin-right:2px}
      .draw{padding:2px 0 0;border-bottom:2px solid #808080;background:#fcfcfc;border-top:1px solid #404040}
      .edge{height:3px;background:#d4d0c8}
      .small{font-family:"Liberation Sans",sans-serif}
    </style>
    <title-bar>ДЕТАЛИ_МАШИН_ЗАДАНИЕ_1_ВАРИАНТ_4.docx - Microsoft Word</title-bar>
    <div class="dock"><menu-bar></menu-bar>
      <div class="row"><tool-bar>${run('new:Создать,open:Открыть,save:Сохранить,perm:Разрешения,mail:Сообщение,|,print:Печать,preview:Просмотр,|,spell:Правописание,research:Справочные материалы,|,cut:Вырезать,copy:Копировать,paste:Вставить,format:Формат по образцу,|,undo:Отменить,v,redo:Вернуть,g,|,link:Гиперссылка,tableborder:Таблицы и границы*,table:Добавить таблицу,excel:Лист Excel,columns:Колонки,drawing:Рисование*,|,docmap:Схема документа,para:Непечатаемые знаки')}<combo-box style="--w:57px" label="Масштаб" value="110%"></combo-box>${run('help:Справка,|')}<tool-button icon="book" style="--w:63px"><span><u>Ч</u>тение</span></tool-button></tool-bar>
      <tool-bar>${run('design:Режим конструктора,props:Свойства,code:Исходный текст,|,check:Флажок,abl:Поле,cmd:Кнопка,radio:Переключатель,list:Список,combo:Поле со списком,toggle:Выключатель,spin:Счётчик,scroll:Полоса прокрутки,label:Надпись,pic:Рисунок,|,tools:Другие элементы')}</tool-bar></div>
      <div class="row"><tool-bar>${run('drawtable:Нарисовать таблицу,erasetable:Ластик,|')}<combo-box rule style="--w:186px" label="Тип линии"></combo-box><combo-box style="--w:45px;text-align:right" label="Толщина линии" value="0,5"></combo-box>${run('penline:Цвет границы,v,|,border:Границы,v,fillwhite:Цвет заливки,v,|,table:Таблица,v,merge:Объединить,split:Разбить,|,cellalign:Выравнивание,v,distrow:Высота строк,distcol:Ширина столбцов,|,autoformat:Автоформат,textdir:Направление текста,|,sortaz:По возрастанию,sortza:По убыванию,sum:Автосумма')}</tool-bar></div>
      <div class="row"><tool-bar>${run('styles:Стили и форматирование')}<combo-box style="--w:99px" label="Стиль" value="Обычный + 12 г"></combo-box><combo-box style="--w:126px" label="Шрифт" value="Times New Roman"></combo-box><combo-box style="--w:47px" label="Размер" value="12"></combo-box>${run('|,bold:Полужирный,italic:Курсив,under:Подчёркнутый,|,left:По левому краю,center:По центру,right:По правому краю,justify:По ширине*,spacing:Интервал,v,|,numbers:Нумерация,bullets:Маркеры,outdent:Уменьшить отступ,indent:Увеличить отступ,|,border:Внешние границы,v,hl:Выделение цветом,v,fontcolor:Цвет шрифта,v')}</tool-bar></div>
      <div class="row"><tool-bar><combo-box class="small" style="--w:214px" label="Вид исправлений" value="Исправления в измененном документе"></combo-box><tool-button menu style="--w:64px"><span>По<u>к</u>азать</span></tool-button>${run('|,prev:Предыдущее,next:Следующее,accept:Принять,v,reject:Отклонить,v,comment:Примечание,hl:Выделение,v,|,track:Исправления,|,pane:Область проверки')}</tool-bar></div>
      <div class="row"><tool-bar>${run('student:КонсультантПлюс')}<tool-button menu style="--w:109px">КонсультантПлюс</tool-button><combo-box style="--w:204px" label="Строка поиска"></combo-box><tool-button icon="find" style="--w:58px">Найти</tool-button><tool-sep></tool-sep><tool-button icon="chain" style="--w:63px">Ссылка</tool-button></tool-bar></div>
    </div>
    <div class="frame"><div class="main"><doc-ruler></doc-ruler>
      <div class="desk"><div class="page">
        <toc-line level="2" tight>7.5  Предварительное натяжение ремня, действующая нагрузка на валы,</toc-line>
        <toc-line page="32">ширина шкивов.</toc-line>
        <toc-line level="2" page="33">7.6  Нормы для контроля предварительного натяжения ремня.</toc-line>
        <toc-line level="1" page="38" fill="…">8. Расчет шпоночных соединений</toc-line>
        <toc-line level="1" page="37">9. Проверка долговечности подшипников</toc-line>
        <toc-line level="1" page="37">9.1 Подшипники ведущего вала 2.</toc-line>
        <toc-line level="1" page="37">9.1.1 Расчётная схема ведущего вала представлена на рисунке 9.1</toc-line>
        <toc-line level="2" page="47">10.2  Расчёт тихоходного вала</toc-line>
        <toc-line level="1" page="49">11. Смазка привода</toc-line>
        <toc-line level="1" page="51">12.  Посадки зубчатого колеса, шкива, полумуфты, подшипников</toc-line>
        <toc-line level="1" page="52">13. Сборка привода</toc-line>
        <toc-line level="1" page="53" fill="…" tight>14. Сертификация…...</toc-line>
        <toc-line level="1" page="56" fill="…" tight>15. Список используемой литературы</toc-line>
      </div></div>
      <scroll-h></scroll-h></div>
      <scroll-v></scroll-v></div>
    <div class="draw"><tool-bar><tool-button menu style="--w:69px"><span><u>Р</u>исование</span></tool-button>${run('cursor:Выбор объектов,|')}<tool-button menu style="--w:80px"><span>Автофи<u>г</u>уры</span></tool-button>${run('line:Линия,arrow:Стрелка,rect:Прямоугольник,oval:Овал,textbox:Надпись,wordart:WordArt,diagram:Диаграмма,clip:Картинка,pic:Рисунок,|,fillyellow:Цвет заливки,v,brush:Цвет линий,v,fontcolor:Цвет шрифта,v,lines:Тип линии,dashes:Тип штриха,arrows:Вид стрелки,shadow:Тень,cube:Объём')}</tool-bar></div>
    <status-bar></status-bar><div class="edge"></div>`;
  }
});
</script>
</body>
</html>
